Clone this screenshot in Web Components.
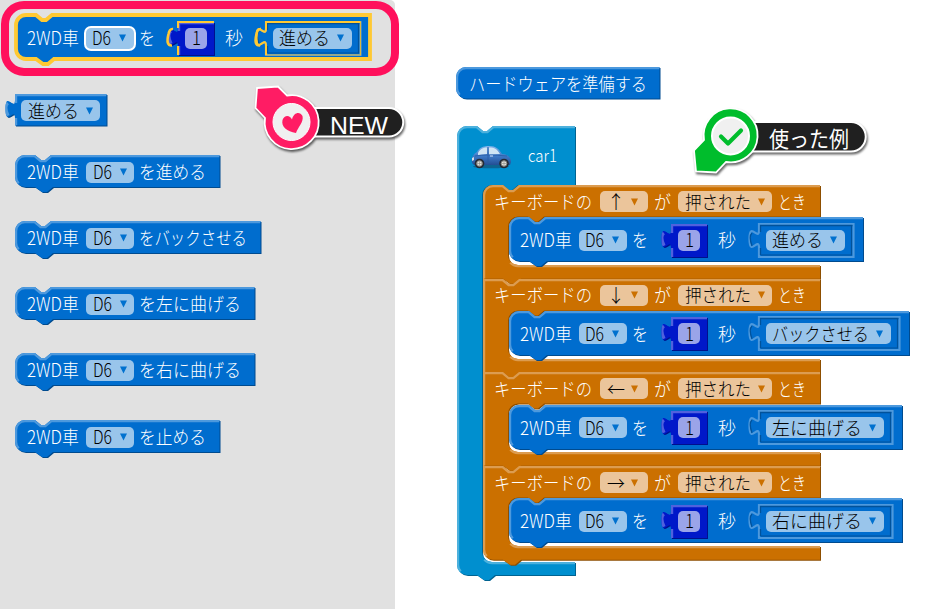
<!DOCTYPE html>
<html lang="ja"><head><meta charset="utf-8"><title>2WD車ブロック</title>
<style>
html,body{margin:0;width:931px;height:609px;overflow:hidden;background:#fff}
body{font-family:"Noto Sans CJK JP","Noto Sans",sans-serif}
</style></head><body><block-editor></block-editor>
<script>
const define=(name,build)=>customElements.define(name,class extends HTMLElement{
  connectedCallback(){
    if(this.shadowRoot)return;
    this.attachShadow({mode:'open'}).innerHTML=build(this,(k,d)=>this.hasAttribute(k)?(isNaN(+this.getAttribute(k))||this.getAttribute(k)===''?this.getAttribute(k):+this.getAttribute(k)):d);
  }
});

/* One run of text, fitted to the width of its column */
define('block-label',(el,a)=>{
  const w=a('w'),s=a('size',18.5);
  return `<style>:host{display:block;flex:none;width:${w}px;height:24px;margin-left:${a('gap',0)}px}
  svg{display:block;overflow:visible}text{font-family:"Noto Sans CJK JP","Noto Sans",sans-serif;font-weight:${a('weight',300)};font-size:${s}px;fill:currentColor}</style>
  <svg width="${w}" height="24"><text x="0" y="${a('base',18.5)}" textLength="${w}" lengthAdjust="spacingAndGlyphs">${el.getAttribute('text')}</text></svg>`;
});

/* Rounded field, with an arrow when it is a dropdown */
define('block-field',(el,a)=>{
  const arrow=a('arrow');
  return `<style>:host{display:flex;flex:none;box-sizing:border-box;align-items:center;width:${a('w')}px;height:21px;border-radius:5px;padding:0 ${a('pr',7.5)}px 0 ${a('pl',6.5)}px;
  justify-content:space-between;margin-left:${a('gap',0)}px;color:#000;background:${a('bg','#99c5eb')};${a('focus')===1?'box-shadow:0 0 0 2px #fff;':''}}
  svg{display:block;flex:none}</style>
  <block-label text="${el.getAttribute('text')}" w="${a('tw')}"></block-label>
  ${arrow?`<svg width="7" height="8"><path d="M0 .5H7L3.5 7.5Z" fill="${arrow}"/></svg>`:''}`;
});

const NOTCH=x=>`H${x+20}l6,5h4l6,-5`;
const TAB=x=>`H${x+38}l-6,5h-5l-7,-5`;
const PLUG='C0,12 -9.5,33.5 -9.5,15C-9.5,-3.5 0,18 0,6';
function outline(kind,w,h,t,b){
  if(kind==='statement')return{body:`M0,10A10,10 0 0 1 10,0${NOTCH(0)}H${w}V${h}${TAB(0)}H10A10,10 0 0 1 0,${h-10}Z`,light:`M3,${h-3}A10,10 0 0 1 0,${h-10}V10A10,10 0 0 1 10,0${NOTCH(0)}H${w}`};
  if(kind==='cap')return{body:`M0,10A10,10 0 0 1 10,0H${w}V${h}H10A10,10 0 0 1 0,${h-10}Z`,light:`M3,${h-3}A10,10 0 0 1 0,${h-10}V10A10,10 0 0 1 10,0H${w}`};
  if(kind==='value'||kind==='socket')return{body:`M0,0H${w}V${h}H0V24${PLUG}Z`,light:`M0,${h}V24M-7.5,22Q-12,12 -7.5,8.5M0,9V0H${w}`};
  const r=kind==='c'||kind==='event'?10:0,c=kind==='next'||kind==='event'?0:10;
  const foot=c?`${TAB(0)}H10A10,10 0 0 1 0,${h-10}`:`${TAB(0)}H0`;
  const start=r?`M0,10A10,10 0 0 1 10,0`:`M0,0`;
  return{body:`${start}${NOTCH(0)}H${w}V${t}H61l-6,5h-4l-6,-5H35A10,10 0 0 0 25,${t+10}V${b-10}A10,10 0 0 0 35,${b}H${w}V${h}${foot}Z`,
    light:`${c?`M3,${h-3}A10,10 0 0 1 0,${h-10}`:`M0,${h}`}V${r}${r?'A10,10 0 0 1 10,0':''}${NOTCH(0)}H${w}M28,${b-3}A10,10 0 0 0 35,${b}H${w}`};
}
const COLORS={blue:['#006dce','#4d99dd','#004b8f'],sky:['#008fcf','#4db1dd','#006391'],orange:['#cb7000','#dc9c50','#8d4e00'],ink:['#0018c9','#5061dd','#00108c']};
let seq=0;
/* Puzzle-shaped box: SVG backing with a flow row on top */
define('block-shape',(el,a)=>{
  const kind=a('kind','statement'),w=a('w'),h=a('h'),s=outline(kind,w,h,a('t',31.5),a('b',80)),c=COLORS[a('color','blue')],id='c'+seq++,sel=a('selected'),hot=a('hot');
  let art;
  if(kind==='socket')art=`<path d="${s.body}" fill="#006dce" stroke="#4d99dd" stroke-width="2.2"/><path d="M1.5,${h-2}V24M-7,22Q-10.5,12 -7,9M1.5,8V1.5H${w-1}" fill="none" stroke="#00529b" stroke-width="1.3"/><path d="M${w-2},2V${h-2}H2" fill="none" stroke="#00529b" stroke-width="1.2"/>${hot?`<path d="${s.body}" fill="none" stroke="#d9b83f" stroke-width="1.2"/>`:''}`;
  else art=(sel?'':`<path d="${s.body}" transform="translate(1 1)" fill="${c[2]}"/>`)+`<path d="${s.body}" fill="${c[0]}" ${sel?'stroke="#ffc933" stroke-width="3.8"':''}/>`+
    (sel?'':`<clipPath id="${id}"><path d="${s.body}"/></clipPath><path d="${s.light}" clip-path="url(#${id})" fill="none" stroke="${c[1]}" stroke-width="4.4"/>`);
  if(hot)art+=`<path d="M0,${h}V24${kind==='socket'?PLUG:'M0,6'}V0H${w}" fill="none" stroke="#ffc933" stroke-width="2"/><path d="M-6,23.5Q-12.5,24 -9.5,12Q-8.5,6.5 -5,7" fill="none" stroke="#ffc933" stroke-width="2.6"/>`;
  return `<style>:host{display:block;position:relative;flex:none;width:${w}px;height:${h}px;margin-left:${a('gap',0)}px;color:#fff}
  svg{position:absolute;left:0;top:0;overflow:visible}
  .row{position:relative;display:flex;align-items:center;height:${a('row',h)}px;padding-left:${a('pad',11)}px;box-sizing:border-box}</style>
  <svg width="${w}" height="${h}">${art}</svg><div class="row"><slot></slot></div>`;
});

/* Timed drive command */
define('drive-block',(el,a)=>{
  const tw=a('tw'),hot=a('hot')?'hot="1"':'';
  return `<style>:host{display:block}</style>
  <block-shape w="${tw+303}" h="44" row="46" pad="11" ${hot?'selected="1"':''}>
  <block-label text="2WD車" w="52"></block-label>
  <block-field text="D6" w="48" tw="19" arrow="#0071cf" gap="7" ${hot?'focus="1"':''}></block-field>
  <block-label text="を" w="16" gap="5"></block-label>
  <block-shape kind="value" color="ink" w="36" h="33" pad="7.5" gap="23" ${hot}><block-field text="1" w="22" tw="9" pl="6.5" pr="6.5" bg="#9aa4e9"></block-field></block-shape>
  <block-label text="秒" w="18" gap="11"></block-label>
  <block-shape kind="socket" w="${tw+43.5}" h="33" pad="7" gap="23" ${hot}><block-field text="${a('action')}" w="${tw+28}" tw="${tw}" arrow="#0071cf"></block-field></block-shape>
  </block-shape>`;
});

define('key-block',(el,a)=>`<style>:host{display:block;position:relative;height:93.7px}drive-block{position:absolute;left:25.5px;top:32.3px}</style>
  <block-shape kind="${a('part')}" color="orange" w="337" h="93.7" t="31.5" b="80" row="33">
  <block-label text="キーボードの" w="98"></block-label>
  <block-field text="${a('key')}" w="48" tw="18" pl="7" pr="10" bg="#ebc59b" arrow="#cb7000" gap="8"></block-field>
  <block-label text="が" w="17" gap="6"></block-label>
  <block-field text="押された" w="94" tw="66" bg="#ebc59b" arrow="#cb7000" gap="7"></block-field>
  <block-label text="とき" w="28" gap="6"></block-label></block-shape>
  <drive-block action="${a('action')}" tw="${a('tw')}"></drive-block>`);

define('car-icon',()=>`<style>:host{display:block;width:42px;height:25px}svg{display:block}</style>
<svg width="42" height="25" viewBox="0 0 42 25"><defs><linearGradient id="g" x2="0" y2="1"><stop stop-color="#83b4eb"/><stop offset=".5" stop-color="#3f7dca"/><stop offset="1" stop-color="#234e94"/></linearGradient></defs>
<ellipse cx="20" cy="21.5" rx="18" ry="1.8" fill="#174766" opacity=".6"/>
<path d="M1 18C0 13 2 9 6 7C8 3 12 1 18 1C25 1 28 4 31 9C36 9 40 12 40 17L39 20H3Z" fill="url(#g)"/>
<path d="M7 8C9 4 12 2.5 16 2.5L16 9L7 10ZM18 2.5C24 2.5 26 4 29 9L18 9.5Z" fill="#cfe5f4"/>
<path d="M17 2V19M4 11Q16 9 36 11" fill="none" stroke="#2a5aa2" stroke-width=".8"/><path d="M19 11h3" stroke="#cfe0fa"/>
<g fill="#252b34"><circle cx="8.5" cy="18.5" r="4.8"/><circle cx="33" cy="18.5" r="4.8"/></g><g fill="#e4e2dc" stroke="#8a8985"><circle cx="8.5" cy="18.5" r="2.8"/><circle cx="33" cy="18.5" r="2.8"/></g>
<path d="M8.5 16v5M6 18.5h5M33 16v5M30.5 18.5h5" stroke="#8a8985" stroke-width=".6"/><path d="M1 13l2-1v3l-2 1Z" fill="#d5dbe5"/></svg>`);

define('badge-text',(el,a)=>`<style>:host{display:block}svg{display:block;overflow:visible}text{fill:#fff;font:${a('size')}px ${a('face')==='latin'?'"Liberation Sans",Arial':'"Noto Sans CJK JP"'},sans-serif}</style><svg width="${a('w')}" height="30"><text y="22" textLength="${a('w')}" lengthAdjust="spacingAndGlyphs">${a('text')}</text></svg>`);

define('pin-badge',(el,a)=>{
  const n=a('kind')==='new',ox=n?251.3:690.3,oy=n?80.5:105;
  const pill=n?'M50,27H138A14,14 0 0 1 138,55.5H50Z':'M50,17H161A14.5,14.5 0 0 1 161,46.5H50Z';
  return `<style>:host{display:block;position:absolute;left:${ox}px;top:${oy}px}svg{display:block;overflow:visible;filter:drop-shadow(1px 2px 1.2px #0009)}badge-text{position:absolute;left:78.5px;top:${n?31:20}px}</style>
  <svg width="176" height="80"><path d="${pill}" fill="#202020" stroke="#fff" stroke-width="2"/>
  ${n?`<path d="M6,7L27,5.5L36,14.5A27,27 0 1 1 14,37L4.5,27Z" fill="#ff1c64" stroke="#fff" stroke-width="1.8"/><circle cx="40.5" cy="41" r="18.5" fill="#f0f0f0" stroke="#fff"/><path d="M45,52C36,50.5 30,46 31.5,39C33.5,33.5 39,34 41,38.5C43,31 49,30.5 51.5,35C53,41 47,46 45,52Z" fill="#ff1c64"/>`:
  `<path d="M4,45.5L14,35A27,27 0 1 1 36,57L26,67.5L6,66.5Z" fill="#00bd2c" stroke="#fff" stroke-width="1.8"/><circle cx="40.5" cy="31" r="18.5" fill="#f0f0f0" stroke="#fff" stroke-width="2"/><path d="M31 31.5l7 7L51 25.5" fill="none" stroke="#00bd2c" stroke-width="4.2" stroke-linecap="round" stroke-linejoin="round"/>`}</svg>
  <badge-text text="${n?'NEW':'使った例'}" w="${n?58:80}" size="${n?24:22}" face="${n?'latin':'jp'}"></badge-text>`;
});

const simple=(t,tw,w,y)=>`<block-shape class="pin" style="left:15px;top:${y}px" w="${w}" h="32" row="34" pad="12"><block-label text="2WD車" w="52"></block-label><block-field text="D6" w="48" tw="19" arrow="#0071cf" gap="7"></block-field><block-label text="${t}" w="${tw}" gap="5"></block-label></block-shape>`;
define('block-editor',()=>`<style>:host{display:block;position:relative;width:931px;height:609px;overflow:hidden}
.pin{position:absolute}.flyout{width:395px;height:609px;background:#e1e1e1;border-radius:0 5px 0 0}
.ring{position:absolute;left:1px;top:1px;width:398px;height:75px;box-sizing:border-box;border:8px solid #ff105c;border-radius:23px}
.keys{position:absolute;left:483px;top:185px}</style>
<div class="flyout"></div><div class="ring"></div>
<drive-block class="pin" style="left:15.5px;top:15px" action="進める" tw="51" hot="1"></drive-block>
<block-shape class="pin" style="left:15px;top:94px" kind="value" w="91.5" h="31.5" row="33" pad="6"><block-field text="進める" w="79" tw="51" arrow="#0071cf"></block-field></block-shape>
${simple('を進める',67,204.5,155)}${simple('をバックさせる',108,245.5,221)}${simple('を左に曲げる',102,239.5,287)}${simple('を右に曲げる',102,239.5,353)}${simple('を止める',67,204.5,420)}
<block-shape class="pin" style="left:456px;top:67px" kind="cap" w="203.5" h="31.5" row="33" pad="12.5"><block-label text="ハードウェアを準備する" w="178"></block-label></block-shape>
<block-shape class="pin" style="left:457.3px;top:126px" kind="c" color="sky" w="118" h="449" t="59" b="436" row="62" pad="14"><car-icon></car-icon><block-label text="car1" w="29" gap="15" size="17" base="16.5"></block-label></block-shape>
<div class="keys"><key-block part="event" key="↑" action="進める" tw="51"></key-block><key-block part="next" key="↓" action="バックさせる" tw="97"></key-block><key-block part="next" key="←" action="左に曲げる" tw="90"></key-block><key-block part="last" key="→" action="右に曲げる" tw="90"></key-block></div>
<pin-badge kind="new"></pin-badge><pin-badge kind="example"></pin-badge>`);
</script></body></html>
